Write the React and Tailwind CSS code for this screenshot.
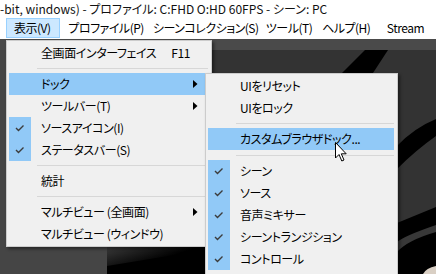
import React from 'react';

const MENUBAR = [
  { label: '表示(V)', w: 'w-[57px]', active: true },
  { label: 'プロファイル(P)', w: 'w-[85px]' },
  { label: 'シーンコレクション(S)', w: 'w-[113px]' },
  { label: 'ツール(T)', w: 'w-[59px]' },
  { label: 'ヘルプ(H)', w: 'w-[68px]' },
  { label: 'Stream', w: 'w-[60px]' },
];

const VIEW_MENU = [
  { label: '全画面インターフェイス', shortcut: 'F11' },
  { sep: true },
  { label: 'ドック', arrow: true, active: true },
  { label: 'ツールバー(T)', arrow: true },
  { label: 'ソースアイコン(I)', checked: true },
  { label: 'ステータスバー(S)', checked: true },
  { sep: true },
  { label: '統計' },
  { sep: true },
  { label: 'マルチビュー (全画面)', arrow: true },
  { label: 'マルチビュー (ウィンドウ)' },
];

const DOCK_MENU = [
  { label: 'UIをリセット' },
  { label: 'UIをロック' },
  { sep: true },
  { label: 'カスタムブラウザドック...', active: true },
  { sep: true, tall: true },
  { label: 'シーン', checked: true },
  { label: 'ソース', checked: true },
  { label: '音声ミキサー', checked: true },
  { label: 'シーントランジション', checked: true },
  { label: 'コントロール', checked: true },
];

const Check = () => (
  <svg width="22" height="22" viewBox="0 0 22 22">
    <polyline points="7,11 9.5,13.5 14.5,8.5" fill="none" stroke="#3c3c3c" strokeWidth="1.4" />
  </svg>
);

const Arrow = () => (
  <svg width="5" height="8" viewBox="0 0 5 8">
    <polygon points="0,0 4.5,4 0,8" fill="#000" />
  </svg>
);

function MenuItems({ items, arrows }) {
  return items.map((it, i) => {
    if (it.sep) {
      return (
        <div key={i} className={`${it.tall ? 'h-[10px]' : 'h-[9px]'} flex items-center`}>
          <div className="h-px flex-1 bg-[#d7d7d7] ml-[30px] mr-[3px]" />
        </div>
      );
    }
    return (
      <div key={i} className={`h-[22px] ml-[2px] mr-[3px] flex items-center ${it.active ? 'bg-[#91c9f7]' : ''}`}>
        <div className={`w-[22px] h-[22px] shrink-0 ${it.checked ? 'bg-[#91c9f7]' : ''}`}>
          {it.checked && <Check />}
        </div>
        <span className="flex-1 pl-[10px] whitespace-nowrap">{it.label}</span>
        {it.shortcut && <span className="mr-[3px]">{it.shortcut}</span>}
        {arrows && (
          <div className="w-[5px] mr-[10px] flex items-center">{it.arrow && <Arrow />}</div>
        )}
      </div>
    );
  });
}

function Preview() {
  return (
    <svg width="436" height="235" viewBox="0 39 436 235" className="block">
      <rect x="0" y="39" width="436" height="235" fill="#333333" />
      <rect x="0" y="39" width="436" height="11" fill="#4a4a4a" />
      <rect x="0" y="50" width="107" height="224" fill="#454545" />
      <polygon points="365,50 388,50 373,73 342,73" fill="#000" />
      <path d="M436,119 Q414,128 397,146 L397,169 Q416,150 436,136 Z" fill="#000" />
      <path d="M397,223 L436,207 L436,274 L397,274 Z" fill="#000" />
      <path d="M397,242 Q404,236 436,225 L436,232 Q408,240 397,252 Z" fill="#383838" />
      <path d="M423,274 Q426,268 436,266 L436,274 Z" fill="#d9cfc4" />
      <defs>
        <linearGradient id="g1" x1="0" y1="0" x2="1" y2="0.6">
          <stop offset="0" stopColor="#3a3a3a" />
          <stop offset="0.7" stopColor="#000" />
        </linearGradient>
      </defs>
      <rect x="107" y="247" width="98" height="27" fill="#000" />
      <polygon points="107,247 205,247 205,250 107,266" fill="url(#g1)" />
    </svg>
  );
}

export default function App() {
  return (
    <div className="relative w-[436px] h-[274px] overflow-hidden bg-white text-[12px] text-black font-['Noto_Sans_CJK_JP','Noto_Sans',sans-serif] [font-feature-settings:'palt']">
      <div className="h-[18px] leading-[18px] whitespace-nowrap text-[#111]">
        -bit, windows) - プロファイル: C:FHD O:HD 60FPS - シーン: PC
      </div>
      <div className="h-[21px] flex pl-[6px] tracking-[-0.5px]">
        {MENUBAR.map((m) => (
          <div
            key={m.label}
            className={`${m.w} h-[20px] flex items-center pl-[7px] whitespace-nowrap border ${m.active ? 'bg-[#cce8ff] border-[#99d1ff]' : 'border-transparent'}`}
          >
            {m.label}
          </div>
        ))}
      </div>
      <Preview />

      {/* 表示 menu */}
      <div className="absolute left-[6px] top-[40px] w-[206px] bg-[#f0f0f0] border border-[#cccccc] py-[1px] tracking-[-0.4px] shadow-[2px_2px_3px_rgba(0,0,0,0.45)]">
        <MenuItems items={VIEW_MENU} arrows />
      </div>

      {/* ドック submenu */}
      <div className="absolute left-[205px] top-[73px] w-[193px] h-[215px] bg-[#f0f0f0] border border-[#cccccc] pt-[1px] tracking-[-0.4px] shadow-[2px_2px_3px_rgba(0,0,0,0.45)]">
        <MenuItems items={DOCK_MENU} />
      </div>

      {/* mouse cursor */}
      <svg width="13" height="21" viewBox="0 0 13 21" className="absolute left-[335px] top-[142px]">
        <path d="M0.5,0.5 L0.5,16 L4,12.5 L6.8,19 L9,18 L6.3,11.8 L11.2,11.8 Z" fill="#fff" stroke="#000" strokeWidth="1" strokeLinejoin="round" />
      </svg>
    </div>
  );
}
